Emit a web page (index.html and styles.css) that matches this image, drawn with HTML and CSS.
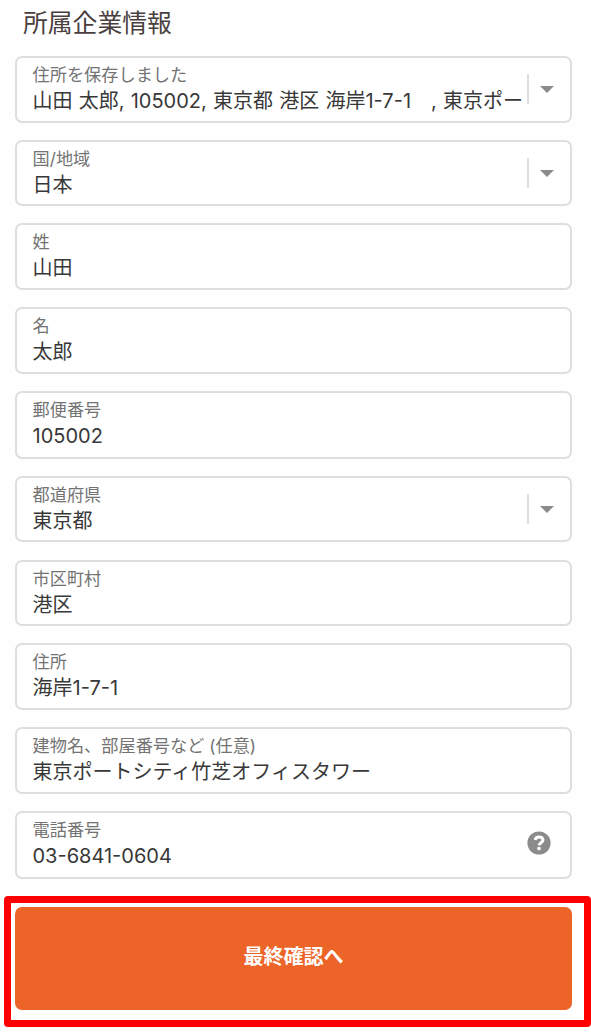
FILE: index.html
```
<!DOCTYPE html>
<html lang="ja">
  <head>
    <meta charset="UTF-8" />
    <title>所属企業情報</title>
    <link rel="stylesheet" href="styles.css">
  </head>
  <body>
    <h1 class="form-title">所属企業情報</h1>

    <div class="form">
      <div class="field">
        <div class="field-text">
          <div class="field-label">住所を保存しました</div>
          <div class="field-value">山田 太郎, 105002, 東京都 港区 海岸1-7-1　, 東京ポー</div>
        </div>
        <div class="field-select"><span class="caret"></span></div>
      </div>

      <div class="field">
        <div class="field-text">
          <div class="field-label">国/地域</div>
          <div class="field-value">日本</div>
        </div>
        <div class="field-select"><span class="caret"></span></div>
      </div>

      <div class="field">
        <div class="field-text">
          <div class="field-label">姓</div>
          <div class="field-value">山田</div>
        </div>
      </div>

      <div class="field">
        <div class="field-text">
          <div class="field-label">名</div>
          <div class="field-value">太郎</div>
        </div>
      </div>

      <div class="field field-tall">
        <div class="field-text">
          <div class="field-label">郵便番号</div>
          <div class="field-value">105002</div>
        </div>
      </div>

      <div class="field">
        <div class="field-text">
          <div class="field-label">都道府県</div>
          <div class="field-value">東京都</div>
        </div>
        <div class="field-select"><span class="caret"></span></div>
      </div>

      <div class="field">
        <div class="field-text">
          <div class="field-label">市区町村</div>
          <div class="field-value">港区</div>
        </div>
      </div>

      <div class="field">
        <div class="field-text">
          <div class="field-label">住所</div>
          <div class="field-value">海岸1-7-1</div>
        </div>
      </div>

      <div class="field">
        <div class="field-text">
          <div class="field-label">建物名、部屋番号など (任意)</div>
          <div class="field-value">東京ポートシティ竹芝オフィスタワー</div>
        </div>
      </div>

      <div class="field field-tall">
        <div class="field-text">
          <div class="field-label">電話番号</div>
          <div class="field-value">03-6841-0604</div>
        </div>
        <svg class="help-icon" viewBox="0 0 24 24" width="24" height="24">
          <circle cx="12" cy="12" r="11.6" fill="#8b8b8b" />
          <path d="M8.200 9C8.500 7 9.900 5.900 12 5.900c2.300 0 4 1.200 4 3.200 0 2.700-3.700 2.400-3.900 5.200" fill="none" stroke="#fff" stroke-width="3" />
          <circle cx="12" cy="17.600" r="1.800" fill="#fff" />
        </svg>
      </div>
    </div>

    <div class="highlight">
      <button class="btn-submit">最終確認へ</button>
    </div>
  </body>
</html>
```
FILE: styles.css
```
:root {
  --accent: #ed6428;
  --highlight: #ff0000;
  --text: #383838;
  --label: #737373;
  --border: #dedede;
}

* {
  margin: 0;
  padding: 0;
  box-sizing: border-box;
}

body {
  font-family: Inter, "Noto Sans CJK JP", sans-serif;
  background: #fefefe;
  color: var(--text);
  height: 1035px;
  overflow: hidden;
}

.form-title {
  height: 56px;
  padding: 5px 0 0 23px;
  font-size: 24.8px;
  font-weight: 400;
  line-height: 36px;
  color: #4a3f3f;
}

.form {
  display: flex;
  flex-direction: column;
  gap: 17.2px;
  width: 557px;
  margin-left: 15px;
}

.field {
  display: flex;
  height: 66.5px;
  padding-left: 15.5px;
  background: white;
  border: 2px solid var(--border);
  border-radius: 7px;
}

.field-tall {
  height: 68px;
}

.field-text {
  flex: 1;
  min-width: 0;
  padding-top: 5px;
  white-space: nowrap;
}

.field-label {
  font-size: 17.2px;
  line-height: 24px;
  color: var(--label);
}

.field-value {
  font-size: 20px;
  line-height: 29px;
  word-spacing: 0.6px;
}

.field-select {
  display: flex;
  align-items: center;
  justify-content: center;
  width: 40px;
  height: 30px;
  margin: 16px 3px 0 0;
  padding: 1px 2px 0 0;
  border-left: 2px solid #dedede;
}

.caret {
  border: 7px solid transparent;
  border-top-color: #8b8b8b;
  border-bottom: 0;
}

.help-icon {
  align-self: center;
  margin: 0 19.5px 3px 0;
}

.highlight {
  width: 587px;
  height: 131px;
  margin: 17px 0 0 4px;
  padding: 4px 12px 10px 4px;
  background: white;
  border: 7px solid var(--highlight);
  border-radius: 4px;
}

.btn-submit {
  display: block;
  width: 557px;
  height: 103px;
  padding-bottom: 5px;
  font-family: inherit;
  font-size: 20px;
  font-weight: 700;
  color: white;
  background: var(--accent);
  border: none;
  border-radius: 7px;
}
```
